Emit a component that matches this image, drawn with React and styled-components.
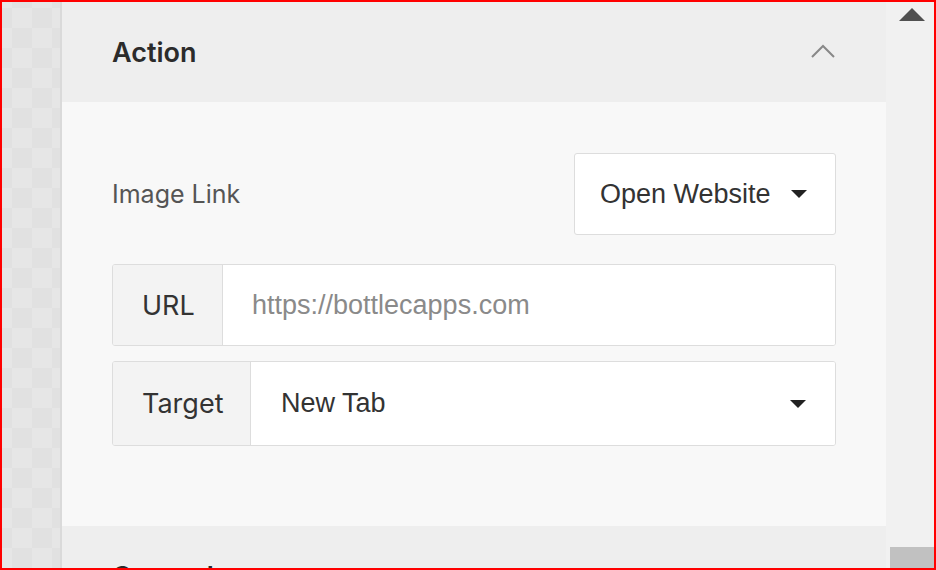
import React from "react";
import styled, { createGlobalStyle } from "styled-components";

const GlobalStyle = createGlobalStyle`
    html, body {
        margin: 0;
        padding: 0;
        background: #ffffff;
    }
    * {
        box-sizing: border-box;
    }
`;

const Frame = styled.div`
    width: 936px;
    height: 570px;
    border: 2px solid #ff0000;
    display: flex;
    overflow: hidden;
    background: #f8f8f8;
`;

/* transparent-canvas strip on the left */
const Checker = styled.div`
    width: 60px;
    flex-shrink: 0;
    border-right: 2px solid #dadada;
    background-color: #e6e6e6;
    background-image:
        linear-gradient(45deg, #e1e1e1 25%, transparent 25%, transparent 75%, #e1e1e1 75%),
        linear-gradient(45deg, #e1e1e1 25%, transparent 25%, transparent 75%, #e1e1e1 75%);
    background-size: 40px 40px;
    background-position: 10px 6px, 30px 26px;
`;

const Panel = styled.div`
    flex: 1;
    display: flex;
    flex-direction: column;
    overflow: hidden;
`;

const SectionHeader = styled.div`
    height: 100px;
    flex-shrink: 0;
    padding: 0 50px;
    display: flex;
    align-items: center;
    justify-content: space-between;
    background: #eeeeee;
`;

const SectionTitle = styled.h2`
    margin: 0;
    font-family: Inter, "Liberation Sans", sans-serif;
    font-size: 27px;
    font-weight: 600;
    color: #2b2b2b;
`;

const SectionBody = styled.div`
    flex-shrink: 0;
    padding: 51px 50px 80px;
    background: #f8f8f8;
    display: flex;
    flex-direction: column;
`;

const FieldRow = styled.div`
    display: flex;
    align-items: center;
    justify-content: space-between;
    margin-bottom: 29px;
`;

const FieldLabel = styled.span`
    font-family: Inter, "Liberation Sans", sans-serif;
    font-size: 25px;
    color: #555555;
`;

const SelectBox = styled.div`
    width: ${props => props.width || "auto"};
    flex: ${props => (props.grow ? 1 : "none")};
    height: ${props => props.height || "82px"};
    padding: 0 ${props => props.padRight || "28px"} 0 ${props => props.padLeft || "25px"};
    display: flex;
    align-items: center;
    justify-content: space-between;
    background: #ffffff;
    border: ${props => (props.joined ? "none" : "1px solid #dddddd")};
    border-radius: ${props => (props.joined ? "0" : "3px")};
    font-family: "Liberation Sans", Arial, sans-serif;
    font-size: 27px;
    color: #333333;
`;

const InputGroup = styled.div`
    display: flex;
    height: ${props => props.height};
    margin-bottom: ${props => props.gap || "0"};
    border: 1px solid #dddddd;
    border-radius: 3px;
    overflow: hidden;
    background: #ffffff;
`;

const Addon = styled.div`
    width: ${props => props.width};
    flex-shrink: 0;
    padding-left: 29px;
    display: flex;
    align-items: center;
    background: #f3f3f3;
    border-right: 1px solid #dddddd;
    font-family: Inter, "Liberation Sans", sans-serif;
    font-size: 27px;
    color: #333333;
`;

const TextInput = styled.input`
    flex: 1;
    min-width: 0;
    border: none;
    outline: none;
    padding: 0 29px;
    background: #ffffff;
    font-family: "Liberation Sans", Arial, sans-serif;
    font-size: 27px;
    color: #333333;
    &::placeholder {
        color: #8a8a8a;
    }
`;

const Caret = styled.span`
    width: 0;
    height: 0;
    border-left: 8px solid transparent;
    border-right: 8px solid transparent;
    border-top: 8px solid #222222;
`;

const Scrollbar = styled.div`
    width: 48px;
    flex-shrink: 0;
    background: #f1f1f1;
    display: flex;
    flex-direction: column;
    justify-content: space-between;
    align-items: center;
`;

const ScrollArrow = styled.span`
    margin-top: 6px;
    margin-left: 4px;
    width: 0;
    height: 0;
    border-left: 13px solid transparent;
    border-right: 13px solid transparent;
    border-bottom: 13px solid #505050;
`;

const ScrollThumb = styled.div`
    width: 44px;
    height: 21px;
    margin-left: 4px;
    background: #c1c1c1;
`;

function Chevron({ color = "#888888" }) {
    return (
        <svg width="26" height="16" viewBox="0 0 26 16" fill="none">
            <path d="M2 13 L13 2 L24 13" stroke={color} strokeWidth="2" />
        </svg>
    );
}

export default function App() {
    return (
        <>
            <GlobalStyle />
            <Frame>
                <Checker />
                <Panel>
                    <SectionHeader>
                        <SectionTitle>Action</SectionTitle>
                        <Chevron />
                    </SectionHeader>
                    <SectionBody>
                        <FieldRow>
                            <FieldLabel>Image Link</FieldLabel>
                            <SelectBox width="262px">
                                <span>Open Website</span>
                                <Caret />
                            </SelectBox>
                        </FieldRow>
                        <InputGroup height="82px" gap="15px">
                            <Addon width="110px">URL</Addon>
                            <TextInput placeholder="https://bottlecapps.com" />
                        </InputGroup>
                        <InputGroup height="85px">
                            <Addon width="138px">Target</Addon>
                            <SelectBox grow joined height="100%" padLeft="30px" padRight="29px">
                                <span>New Tab</span>
                                <Caret />
                            </SelectBox>
                        </InputGroup>
                    </SectionBody>
                    <SectionHeader>
                        <SectionTitle>General</SectionTitle>
                        <Chevron />
                    </SectionHeader>
                </Panel>
                <Scrollbar>
                    <ScrollArrow />
                    <ScrollThumb />
                </Scrollbar>
            </Frame>
        </>
    );
}
